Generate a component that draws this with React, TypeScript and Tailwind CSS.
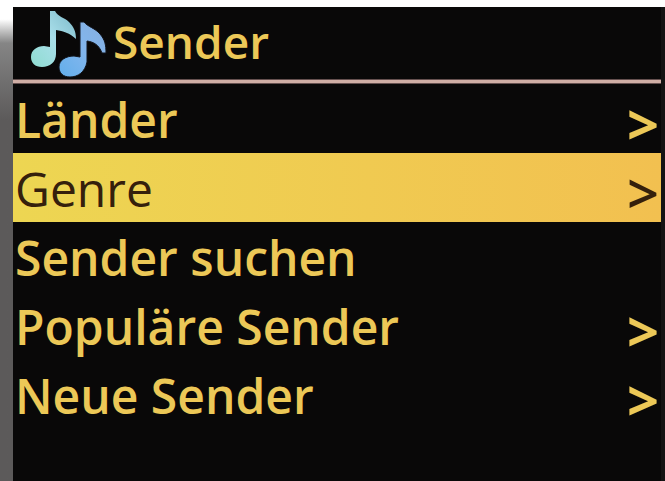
import { useState } from 'react';

type MenuItem = {
  id: string;
  label: string;
  hasSubmenu: boolean;
};

const MENU_ITEMS: MenuItem[] = [
  { id: 'countries', label: 'Länder', hasSubmenu: true },
  { id: 'genre', label: 'Genre', hasSubmenu: true },
  { id: 'search', label: 'Sender suchen', hasSubmenu: false },
  { id: 'popular', label: 'Populäre Sender', hasSubmenu: true },
  { id: 'new', label: 'Neue Sender', hasSubmenu: true },
];

function NotesIcon() {
  return (
    <svg className="shrink-0" width="100" height="72" viewBox="0 0 100 72" fill="none" aria-hidden>
      <defs>
        <linearGradient id="noteBack" x1="0" y1="1" x2="1" y2="0">
          <stop offset="0" stopColor="#8fdcd0" />
          <stop offset="0.5" stopColor="#a9dfea" />
          <stop offset="1" stopColor="#7cb8c8" />
        </linearGradient>
        <linearGradient id="noteFront" x1="0" y1="1" x2="1" y2="0">
          <stop offset="0" stopColor="#62aeea" />
          <stop offset="0.5" stopColor="#82b6ee" />
          <stop offset="1" stopColor="#86aede" />
        </linearGradient>
      </defs>
      <path
        d="M37 4 L42 4 C45 10 51 10 56 15 C61 20 63 25 63 32 C57 26 50 24 43 23 L43 47 C43 55 37 60 29 60 C22 60 18 56 18 50 C18 43 24 39 31 39 L37 40 Z"
        fill="url(#noteBack)"
      />
      <path
        d="M67 15 L71 15 C75 20 82 21 87 27 C92 33 93 38 93 46 L89 46 C86 38 81 35 74 34 L74 55 C72 65 65 70 57 70 C50 70 46 66 46 60 C46 53 53 49 61 49 L67 50 Z"
        fill="url(#noteFront)"
        stroke="#12151c"
        strokeWidth="1"
      />
    </svg>
  );
}

export default function App() {
  const [selectedId, setSelectedId] = useState('genre');

  return (
    <div className="flex min-h-dvh bg-white font-['Open_Sans','Noto_Sans',sans-serif] text-[48px] leading-[69px] font-semibold">
      {/* Device bezel */}
      <div className="w-[13px] shrink-0 bg-linear-to-b from-white from-4% via-[#858585] via-9% to-[#5c5a5a] to-25%" />

      <div className="flex min-w-0 grow flex-col">
        <div className="h-[7px] shrink-0" />
        <main className="flex grow flex-col border-r-4 border-[#141313] bg-[#090808] text-[#ecc857]">
          <header className="flex h-[72px] items-start">
            <NotesIcon />
            <h1 className="text-[46px]">Sender</h1>
          </header>
          <div className="h-[5px] border-y border-[#65504f] bg-[#d0aea5]" />

          <nav>
            <ul>
              {MENU_ITEMS.map((item) => {
                const selected = item.id === selectedId;
                return (
                  <li key={item.id}>
                    <button
                      type="button"
                      onClick={() => setSelectedId(item.id)}
                      className={[
                        'flex h-[69px] w-full items-center justify-between px-0.5 pt-0.5 text-left',
                        selected
                          ? 'bg-linear-to-r from-[#edd652] to-[#f2c050] font-medium text-[#35200c]'
                          : '',
                      ].join(' ')}
                    >
                      <span>{item.label}</span>
                      {item.hasSubmenu && (
                        <span
                          className={[
                            'pt-2 text-[56px] leading-[61px]',
                            selected ? 'font-semibold' : 'font-bold',
                          ].join(' ')}
                          aria-hidden
                        >
                          &gt;
                        </span>
                      )}
                    </button>
                  </li>
                );
              })}
            </ul>
          </nav>
        </main>
      </div>
    </div>
  );
}
